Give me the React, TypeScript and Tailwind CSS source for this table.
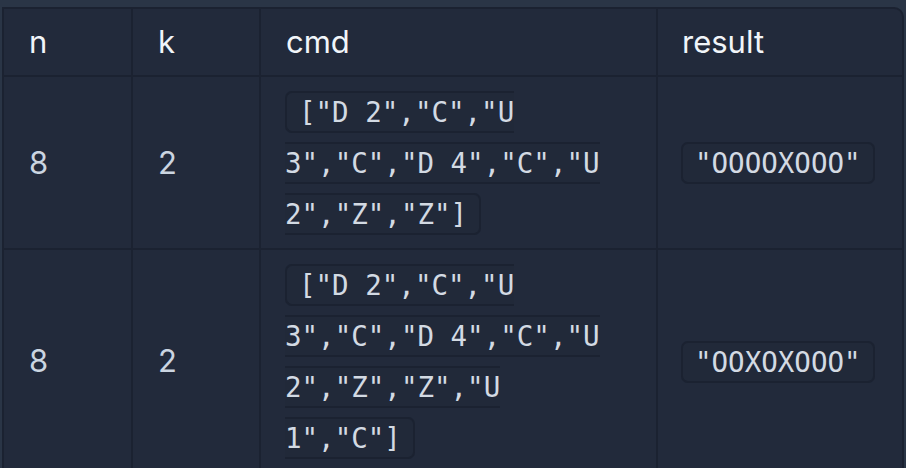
const rows = [
  { n: '8', k: '2', cmd: '["D 2","C","U 3","C","D 4","C","U 2","Z","Z"]', result: '"OOOOXOOO"' },
  { n: '8', k: '2', cmd: '["D 2","C","U 3","C","D 4","C","U 2","Z","Z","U 1","C"]', result: '"OOXOXOOO"' },
];

function Code({ children }: { children: string }) {
  return (
    <code className="rounded-[7px] border-2 border-[#1b2231] bg-[#212939] px-[12px] py-[3px] font-['DejaVu_Sans_Mono',monospace] text-[27.5px] text-[#d3dae3]">
      {children}
    </code>
  );
}

export default function App() {
  return (
    <div className="h-[468px] w-[906px] overflow-hidden bg-[#2a3546] pl-[2px] pt-[7px] font-['Inter',sans-serif]">
      <div className="w-[902px] overflow-hidden rounded-tr-[10px] border-2 border-[#1b2231] bg-[#222a3b]">
        <table className="w-full table-fixed border-collapse text-[31px] leading-[50px]">
          <colgroup>
            <col className="w-[128px]" />
            <col className="w-[128px]" />
            <col className="w-[397px]" />
            <col />
          </colgroup>
          <thead>
            <tr className="text-left text-[#f1f5f9]">
              <th className="border-r-2 border-b-2 border-[#1b2231] px-[25px] py-[8px] font-normal">n</th>
              <th className="border-r-2 border-b-2 border-[#1b2231] px-[25px] py-[8px] font-normal">k</th>
              <th className="border-r-2 border-b-2 border-[#1b2231] px-[25px] py-[8px] font-normal">cmd</th>
              <th className="border-b-2 border-[#1b2231] px-[24px] py-[8px] font-normal">result</th>
            </tr>
          </thead>
          <tbody className="text-[#cbd5e1]">
            {rows.map((r, i) => (
              <tr key={i}>
                <td className="border-r-2 border-b-2 border-[#1b2231] px-[25px] py-[9px] align-middle">{r.n}</td>
                <td className="border-r-2 border-b-2 border-[#1b2231] px-[25px] py-[9px] align-middle">{r.k}</td>
                <td className="border-r-2 border-b-2 border-[#1b2231] px-[24px] py-[9px] align-middle">
                  <Code>{r.cmd}</Code>
                </td>
                <td className="border-b-2 border-[#1b2231] px-[23px] py-[9px] align-middle">
                  <Code>{r.result}</Code>
                </td>
              </tr>
            ))}
          </tbody>
        </table>
      </div>
    </div>
  );
}
